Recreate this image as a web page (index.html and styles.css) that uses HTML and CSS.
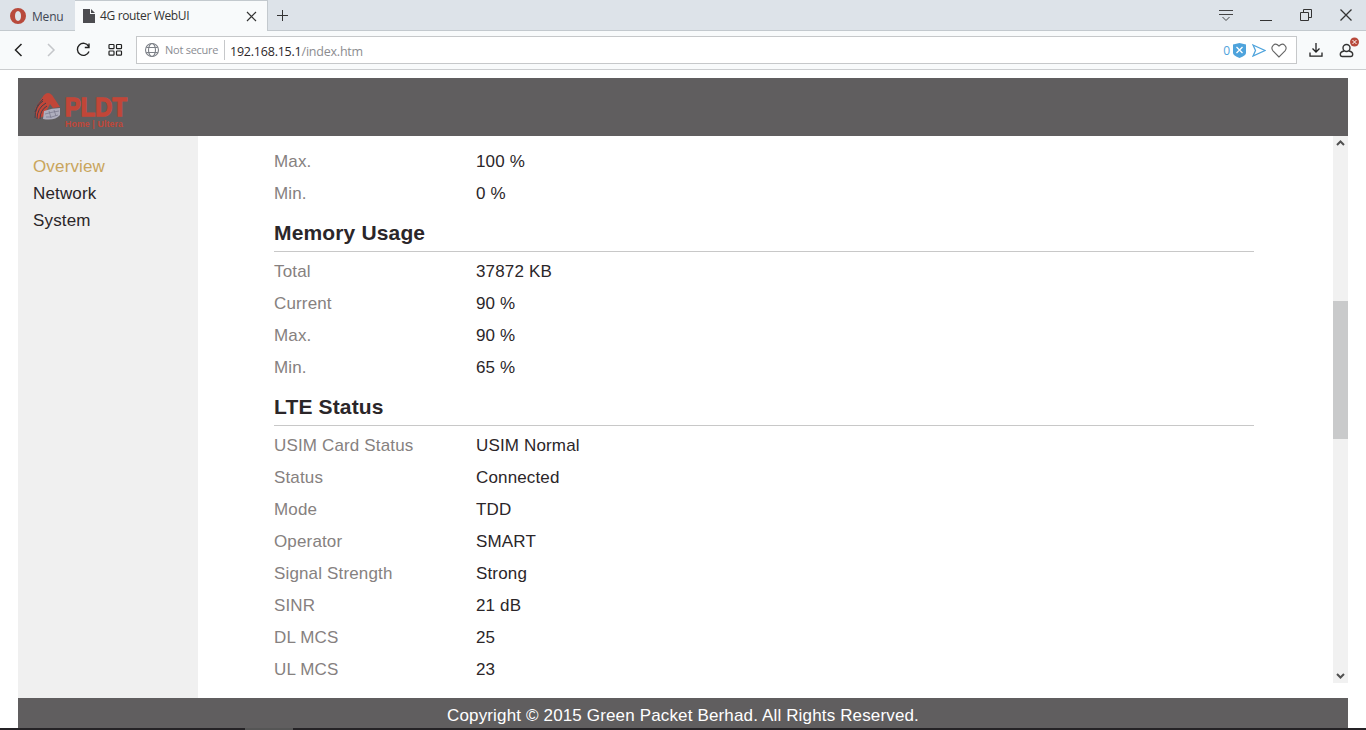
FILE: index.html
```html
<!DOCTYPE html>
<html lang="en">
  <head>
    <meta charset="utf-8">
    <title>4G router WebUI</title>
    <link rel="stylesheet" href="styles.css">
  </head>
  <body>
    <div class="tab-bar">
      <div class="menu-button">
        <svg width="16" height="16" viewBox="0 0 16 16"><path fill-rule="evenodd" d="M8 0a8 8 0 1 0 0 16A8 8 0 1 0 8 0zM8 3c2 0 3 2.200 3 5s-1 5-3 5-3-2.200-3-5 1-5 3-5z" fill="#b84a3c"/></svg>
        <span>Menu</span>
      </div>
      <div class="tab">
        <svg width="12" height="14" viewBox="0 0 12 14"><path d="M0 0h7v5h5v9H0z" fill="#4c4c50"/><path d="M8 0l4 4H8z" fill="#4c4c50"/></svg>
        <span class="tab-title">4G router WebUI</span>
        <svg width="11" height="11" viewBox="0 0 11 11"><path d="M1 1l9 9M10 1l-9 9" stroke="#333" stroke-width="1.2"/></svg>
      </div>
      <div class="new-tab">
        <svg width="11" height="11" viewBox="0 0 11 11"><path d="M5.500 0v11M0 5.500h11" stroke="#333"/></svg>
      </div>
      <div class="window-controls">
        <svg width="16" height="14" viewBox="0 0 16 14"><path d="M1 2.500h14M1 6.500h14M4.500 9l3.500 3.500L11.500 9" fill="none" stroke="#444"/></svg>
        <svg width="12" height="14" viewBox="0 0 12 14"><path d="M0 12.500h12" stroke="#333"/></svg>
        <svg width="12" height="14" viewBox="0 0 12 14"><path d="M.5 4.500h8v8h-8zM3.500 4V1.500h8v8H9" fill="none" stroke="#333"/></svg>
        <svg width="12" height="14" viewBox="0 0 12 14"><path d="M.5 1.500l11 11M11.500 1.500l-11 11" stroke="#333" stroke-width="1.300"/></svg>
      </div>
    </div>

    <div class="toolbar">
      <div class="nav-buttons">
        <svg width="16" height="16" viewBox="0 0 16 16"><path d="M10.500 2L4.500 8l6 6" fill="none" stroke="#222" stroke-width="1.500"/></svg>
        <svg width="16" height="16" viewBox="0 0 16 16"><path d="M5 2l6 6-6 6" fill="none" stroke="#c4c6ca" stroke-width="1.500"/></svg>
        <svg width="16" height="16" viewBox="0 0 16 16"><path d="M13.600 4.300A6 6 0 1 0 14 9.500M14 1.500v4H9.800" fill="none" stroke="#222" stroke-width="1.400"/></svg>
        <svg width="16" height="16" viewBox="0 0 16 16"><g fill="none" stroke="#222" stroke-width="1.200"><rect x="2" y="2.500" width="5" height="4.200" rx=".8"/><rect x="9.500" y="2.500" width="5" height="4.200" rx=".8"/><rect x="2" y="9" width="5" height="4.200" rx=".8"/><rect x="9.500" y="9" width="5" height="4.200" rx=".8"/></g></svg>
      </div>
      <div class="address">
        <svg width="16" height="16" viewBox="0 0 16 16"><g fill="none" stroke="#7d8188" stroke-width="1.100"><circle cx="8" cy="8" r="6.500"/><ellipse cx="8" cy="8" rx="3.500" ry="6.500"/><path d="M2.300 5.500h11.400M2.300 10.500h11.400"/></g></svg>
        <span class="security">Not secure</span>
        <span class="url">192.168.15.1<span class="path">/index.htm</span></span>
        <span class="block-count">0</span>
        <svg class="shield" width="13" height="15" viewBox="0 0 13 15"><path d="M6.500 0L13 1.500V10q0 2.500-6.500 5Q0 12.500 0 10V1.500z" fill="#4ea3dc"/><path d="M3.500 4l6 6M9.500 4l-6 6" stroke="#fff" stroke-width="1.300"/></svg>
        <svg class="send" width="14" height="13" viewBox="0 0 14 13"><path d="M1 1l12 5.500L1 12l2.500-5.500z" fill="none" stroke="#4ea3dc" stroke-width="1.300"/></svg>
        <svg width="16" height="15" viewBox="0 0 16 15"><path d="M8 14L2 7.800C-1 4 3.500-1.500 8 3 12.500-1.500 17 4 14 7.800z" fill="none" stroke="#666" stroke-width="1.100"/></svg>
      </div>
      <svg class="download" width="14" height="14" viewBox="0 0 14 14"><path d="M7 0v9M3.500 5.500L7 9l3.500-3.500M1 9.500v3.700h12V9.500" fill="none" stroke="#222" stroke-width="1.300"/></svg>
      <svg class="account" width="20" height="22" viewBox="0 0 20 22"><g fill="none" stroke="#333" stroke-width="1.400"><circle cx="7.500" cy="11" r="3.500"/><path d="M5 14q-3.700.8-3.700 3.300 0 2.200 2 2.200h8.400q2 0 2-2.200Q13.700 14.800 10 14"/></g><circle cx="15.500" cy="5" r="4.500" fill="#b84a3c"/><path d="M13.500 3l4 4M17.500 3l-4 4" stroke="#fff"/></svg>
    </div>

    <div class="page">
      <div class="header">
        <svg class="logo" width="96" height="38" viewBox="0 0 96 38">
          <path d="M10 3q4-4 8 0l8 12-7 1-3-4-6 12-6 3q-5-4-2-12z" fill="#c24638"/>
          <g fill="none" stroke="#45414a"><path d="M1 26q0-12 8-17M3 27q0-11 9-16M6 27q0-9 7-13M1 20q2-8 8-13"/></g>
          <path d="M10 19q8-3 16-3v7q-5 6-17 4z" fill="#aeaebd"/>
          <path d="M11 22q7-2 14-3M12 25q5 1 12-2M15 19l2 7M20 18l2 6" stroke="#77768a" stroke-width=".7" fill="none"/>
          <text class="logo-name" x="31" y="24" textLength="62" lengthAdjust="spacingAndGlyphs">PLDT</text>
          <text class="logo-sub" x="31" y="34.500" textLength="58" lengthAdjust="spacingAndGlyphs">Home | Ultera</text>
        </svg>
      </div>

      <div class="body">
        <div class="sidebar">
          <a class="active">Overview</a>
          <a>Network</a>
          <a>System</a>
        </div>

        <div class="content">
          <dl>
            <dt>Max.</dt><dd>100 %</dd>
            <dt>Min.</dt><dd>0 %</dd>
          </dl>

          <h2>Memory Usage</h2>
          <dl>
            <dt>Total</dt><dd>37872 KB</dd>
            <dt>Current</dt><dd>90 %</dd>
            <dt>Max.</dt><dd>90 %</dd>
            <dt>Min.</dt><dd>65 %</dd>
          </dl>

          <h2>LTE Status</h2>
          <dl>
            <dt>USIM Card Status</dt><dd>USIM Normal</dd>
            <dt>Status</dt><dd>Connected</dd>
            <dt>Mode</dt><dd>TDD</dd>
            <dt>Operator</dt><dd>SMART</dd>
            <dt>Signal Strength</dt><dd>Strong</dd>
            <dt>SINR</dt><dd>21 dB</dd>
            <dt>DL MCS</dt><dd>25</dd>
            <dt>UL MCS</dt><dd>23</dd>
          </dl>
        </div>

        <div class="scrollbar">
          <svg width="9" height="6" viewBox="0 0 9 6"><path d="M1 5l3.500-3.500L8 5" fill="none" stroke="#505050" stroke-width="2"/></svg>
          <div class="thumb"></div>
          <svg width="9" height="6" viewBox="0 0 9 6"><path d="M1 1l3.500 3.500L8 1" fill="none" stroke="#505050" stroke-width="2"/></svg>
        </div>
      </div>

      <div class="footer">Copyright © 2015 Green Packet Berhad. All Rights Reserved.</div>
    </div>

    <div class="taskbar"></div>
  </body>
</html>
```
FILE: styles.css
```css
* {
  box-sizing: border-box;
}

body {
  margin: 0;
  height: 100vh;
  overflow: hidden;
  display: flex;
  flex-direction: column;
  background: #fff;
  color: #2b2629;
  font-family: "Liberation Sans", Arial, sans-serif;
}

svg {
  display: block;
  flex-shrink: 0;
}

/* Browser chrome */
.tab-bar {
  display: flex;
  height: 31px;
  flex-shrink: 0;
  background: #dde3e9;
  border-bottom: 1px solid #c3c9ce;
  font-family: "Open Sans", "Noto Sans", sans-serif;
  font-size: 12px;
  color: #333;
}

.menu-button {
  display: flex;
  align-items: center;
  gap: 6px;
  width: 75px;
  padding: 2px 0 0 10px;
  color: #3f4654;
  letter-spacing: -0.2px;
}

.tab {
  display: flex;
  align-items: center;
  width: 193px;
  height: 31px;
  padding: 0 10px 0 8px;
  background: #f8fafb;
  border: 1px solid #c3c9ce;
  border-width: 1px 1px 0 0;
}

.tab-title {
  flex-grow: 1;
  margin: -2px 0 0 5px;
  letter-spacing: -0.35px;
}

.new-tab {
  display: flex;
  align-items: center;
  padding-left: 9px;
}

.window-controls {
  display: flex;
  align-items: center;
  gap: 28px;
  margin-left: auto;
  padding-right: 14px;
}

.window-controls svg:first-child {
  margin-right: -2px;
}

.toolbar {
  display: flex;
  align-items: center;
  height: 39px;
  flex-shrink: 0;
  background: #f8fafb;
  border-bottom: 1px solid #cbcdcf;
  font-family: "Open Sans", "Noto Sans", sans-serif;
}

.nav-buttons {
  display: flex;
  gap: 16px;
  width: 136px;
  padding-left: 11px;
}

.address {
  display: flex;
  align-items: center;
  width: 1161px;
  height: 28px;
  padding: 0 9px 0 7px;
  background: #fff;
  border: 1px solid #c6c8ca;
  font-size: 12px;
}

.security {
  width: 60px;
  height: 20px;
  margin-left: 5px;
  border-right: 1px solid #c6c8ca;
  color: #8a8c92;
  font-size: 11px;
  letter-spacing: -0.25px;
  line-height: 20px;
  white-space: nowrap;
}

.url {
  flex-grow: 1;
  margin-left: 5px;
  padding-top: 2px;
  font-size: 12.5px;
  letter-spacing: -0.22px;
}

.path {
  color: #8c8c90;
}

.block-count {
  margin-right: 3px;
  color: #4ea3dc;
}

.shield {
  margin-right: 6px;
}

.send {
  margin-right: 5px;
}

.download {
  margin-left: 12px;
}

.account {
  margin: -5px 0 0 16px;
}

/* Router page */
.page {
  display: flex;
  flex-direction: column;
  height: 650px;
  flex-shrink: 0;
  margin: 8px 18px 0;
  font-size: 17px;
  letter-spacing: 0.15px;
}

.header {
  height: 58px;
  flex-shrink: 0;
  padding: 14px 0 0 16px;
  background: #605e5f;
}

.logo-name {
  fill: #c24638;
  stroke: #c24638;
  stroke-width: 1.4px;
  font-size: 25px;
  font-weight: bold;
}

.logo-sub {
  fill: #c24638;
  font-size: 9px;
  font-weight: bold;
}

.body {
  display: flex;
  height: 562px;
  flex-shrink: 0;
}

.sidebar {
  display: flex;
  flex-direction: column;
  width: 180px;
  padding: 17px 15px;
  background: #f0f0f0;
  line-height: 27px;
}

.sidebar .active {
  color: #c9a55c;
}

.content {
  flex-grow: 1;
  padding: 9px 79px 0 76px;
  overflow: hidden;
}

dl {
  display: grid;
  grid-template-columns: 202px 1fr;
  grid-auto-rows: 32px;
  margin: 0;
  line-height: 34px;
}

dt {
  color: #868180;
}

dd {
  margin: 0;
}

h2 {
  height: 43px;
  margin: 0 0 3px;
  border-bottom: 1px solid #c8c8c8;
  font-size: 21px;
  line-height: 48px;
}

.scrollbar {
  display: flex;
  flex-direction: column;
  align-items: center;
  justify-content: space-between;
  width: 15px;
  height: 547px;
  padding: 4px 0;
  background: #f1f1f1;
}

.thumb {
  width: 15px;
  height: 138px;
  margin-bottom: 80px;
  background: #c9cacb;
}

.footer {
  height: 30px;
  overflow: hidden;
  background: #605e5f;
  color: #fff;
  line-height: 36px;
  text-align: center;
}

.taskbar {
  height: 2px;
  flex-shrink: 0;
  background: linear-gradient(90deg, #252326 245px, #555 245px, #555 293px, #252326 293px);
}
```
